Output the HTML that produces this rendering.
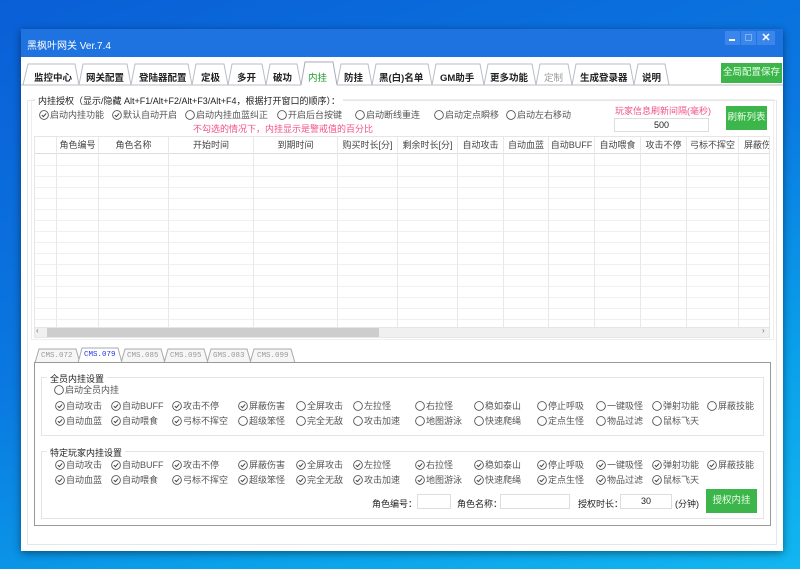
<!DOCTYPE html>
<html><head><meta charset="utf-8"><style>
*{margin:0;padding:0;box-sizing:border-box}
body{width:800px;height:569px;overflow:hidden;position:relative;font-family:"Liberation Sans","Noto Sans CJK SC",sans-serif;font-size:9px;color:#333;
background:linear-gradient(160deg,#0a5fd6 0%,#0a78e0 45%,#0aa0ea 75%,#12b6f0 100%)}
.a{position:absolute;white-space:nowrap}
#win{position:absolute;left:21px;top:29px;width:762px;height:522px;background:#fff;box-shadow:0 2px 8px rgba(0,0,0,.45)}
#tb{position:absolute;left:0;top:0;width:762px;height:28px;background:#1f73e0}
.it{position:absolute;white-space:nowrap;color:#555;font-size:9px;line-height:11px}
.it svg{vertical-align:-2px;margin-right:1px}
.tab{position:absolute;font-weight:bold;font-size:9.5px;color:#222}
.gl{position:absolute;border:1px solid #e4e4e4}
.gt{position:absolute;background:#fff;padding:0 3px;font-size:9px;color:#222}
.btn{position:absolute;background:#3cb64a;color:#eaffea;font-size:9.5px;text-align:center}
.inp{position:absolute;border:1px solid #ddd;background:#fff;text-align:center;font-size:9px;color:#222}
.hd{position:absolute;top:0;height:17px;line-height:17px;font-size:9px;color:#444;text-align:center}
.bt{position:absolute;font-family:'Liberation Mono',monospace;font-size:7.5px;color:#999;top:323px}
</style></head><body>
<div id="win">
<div id="tb"></div>
<div class="a" style="left:6px;top:8px;color:#fff;font-size:10px">黑枫叶网关 Ver.7.4</div>
<div class="a" style="left:704px;top:2px;width:15px;height:14px;background:#3a86ea"></div>
<div class="a" style="left:708px;top:10px;width:6px;height:1.5px;background:#fff"></div>
<div class="a" style="left:720px;top:2px;width:15px;height:14px;background:#3a86ea"></div>
<div class="a" style="left:724px;top:5px;width:7px;height:7px;border:1px solid #7fb0f0"></div>
<div class="a" style="left:736px;top:2px;width:18px;height:14px;background:#3a86ea;color:#fff;font-size:11px;font-weight:bold;text-align:center;line-height:14px">✕</div>

<svg class="a" style="left:0;top:28px" width="762" height="40">
<g fill="none" stroke="#b8bec6" stroke-width="1">
<path d="M2,28 L7,7 L54,7 L58,28 M58,28 L62,7 L106,7 L110,28 M110,28 L114,7 L167,7 L171,28 M171,28 L175,7 L203,7 L207,28 M207,28 L211,7 L241,7 L245,28 M245,28 L249,7 L276,7 L280,28 M316,28 L320,7 L347,7 L351,28 M351,28 L355,7 L407,7 L411,28 M411,28 L415,7 L459,7 L463,28 M463,28 L467,7 L511,7 L515,28 M515,28 L519,7 L547,7 L551,28 M551,28 L555,7 L609,7 L613,28 M613,28 L617,7 L644,7 L648,28"/>
<path d="M0,28 L280,28 M316,28 L762,28" />
<path d="M280,28 L284,5 L312,5 L316,28" stroke="#aab"/>
</g>
</svg>
<div class="tab" style="left:13px;top:41px">监控中心</div>
<div class="tab" style="left:65px;top:41px">网关配置</div>
<div class="tab" style="left:118px;top:41px">登陆器配置</div>
<div class="tab" style="left:180px;top:41px">定极</div>
<div class="tab" style="left:216px;top:41px">多开</div>
<div class="tab" style="left:252px;top:41px">破功</div>
<div class="tab" style="left:287px;top:41px;color:#1a9a2a;font-weight:normal">内挂</div>
<div class="tab" style="left:323px;top:41px">防挂</div>
<div class="tab" style="left:358px;top:41px">黑(白)名单</div>
<div class="tab" style="left:419px;top:41px">GM助手</div>
<div class="tab" style="left:469px;top:41px">更多功能</div>
<div class="tab" style="left:523px;top:41px;color:#999;font-weight:normal">定制</div>
<div class="tab" style="left:559px;top:41px">生成登录器</div>
<div class="tab" style="left:621px;top:41px">说明</div>
<div class="btn" style="left:700px;top:34px;width:61px;height:20px;line-height:20px">全局配置保存</div>

<div class="gl" style="left:6px;top:71px;width:750px;height:445px;border-color:#e6e6e6"></div>
<div class="gl" style="left:10px;top:70px;width:743px;height:241px;border-color:#eee"></div>
<div class="gt" style="left:14px;top:65px">内挂授权（显示/隐藏 Alt+F1/Alt+F2/Alt+F3/Alt+F4，根据打开窗口的顺序）：</div>
<div id="top"></div>
<div class="a" style="left:172px;top:93px;color:#f0508a;font-size:9px">不勾选的情况下，内挂显示是警戒值的百分比</div>
<div class="a" style="left:594px;top:75px;color:#f0508a;font-size:9px">玩家信息刷新间隔(毫秒)</div>
<div class="inp" style="left:593px;top:89px;width:95px;height:14px;line-height:12px">500</div>
<div class="btn" style="left:705px;top:77px;width:41px;height:24px;line-height:24px">刷新列表</div>

<div class="a" style="left:13px;top:107px;width:736px;height:202px;border:1px solid #e6e6e6;background:#fff;overflow:hidden">
<div class="a" style="left:0;top:0;width:736px;height:17px;border-bottom:1px solid #ddd"></div>
<div class="a" style="left:0;top:18px;width:736px;height:190px;background:repeating-linear-gradient(to bottom,#fff 0,#fff 10px,#f0f0f0 10px,#f0f0f0 11px)"></div>
<div class="a" style="left:0;top:0;width:736px;height:200px;background:linear-gradient(to right,transparent 21px,#e8e8e8 21px,#e8e8e8 22px,transparent 22px,transparent 63px,#e8e8e8 63px,#e8e8e8 64px,transparent 64px,transparent 133px,#e8e8e8 133px,#e8e8e8 134px,transparent 134px,transparent 218px,#e8e8e8 218px,#e8e8e8 219px,transparent 219px,transparent 302px,#e8e8e8 302px,#e8e8e8 303px,transparent 303px,transparent 362px,#e8e8e8 362px,#e8e8e8 363px,transparent 363px,transparent 422px,#e8e8e8 422px,#e8e8e8 423px,transparent 423px,transparent 468px,#e8e8e8 468px,#e8e8e8 469px,transparent 469px,transparent 513px,#e8e8e8 513px,#e8e8e8 514px,transparent 514px,transparent 559px,#e8e8e8 559px,#e8e8e8 560px,transparent 560px,transparent 605px,#e8e8e8 605px,#e8e8e8 606px,transparent 606px,transparent 651px,#e8e8e8 651px,#e8e8e8 652px,transparent 652px,transparent 703px,#e8e8e8 703px,#e8e8e8 704px,transparent 704px)"></div>
<div class="hd" style="left:22px;width:41px">角色编号</div>
<div class="hd" style="left:64px;width:69px">角色名称</div>
<div class="hd" style="left:134px;width:84px">开始时间</div>
<div class="hd" style="left:219px;width:83px">到期时间</div>
<div class="hd" style="left:303px;width:59px">购买时长[分]</div>
<div class="hd" style="left:363px;width:59px">剩余时长[分]</div>
<div class="hd" style="left:423px;width:45px">自动攻击</div>
<div class="hd" style="left:469px;width:44px">自动血蓝</div>
<div class="hd" style="left:514px;width:45px">自动BUFF</div>
<div class="hd" style="left:560px;width:45px">自动喂食</div>
<div class="hd" style="left:606px;width:45px">攻击不停</div>
<div class="hd" style="left:652px;width:51px">弓标不挥空</div>
<div class="hd" style="left:704px;width:40px;text-align:left;padding-left:5px">屏蔽伤</div>
</div>
<div class="a" style="left:13px;top:298px;width:736px;height:11px;background:#f0f0f0;border:1px solid #e6e6e6"></div>
<div class="a" style="left:26px;top:299px;width:332px;height:9px;background:#cdcdcd"></div>
<div class="a" style="left:15px;top:297px;color:#777;font-size:8px">‹</div>
<div class="a" style="left:741px;top:297px;color:#777;font-size:8px">›</div>

<svg class="a" style="left:0;top:316px" width="762" height="20">
<g fill="#f6f6f6" stroke="#aaa" stroke-width="1">
<path d="M14,18 L18,4 L55,4 L59,18"/>
<path d="M100,18 L104,4 L140,4 L144,18"/>
<path d="M143,18 L147,4 L183,4 L187,18"/>
<path d="M186,18 L190,4 L226,4 L230,18"/>
<path d="M229,18 L233,4 L270,4 L274,18"/>
<path d="M57,18 L61,3 L97,3 L101,18" fill="#fff"/>
</g>
</svg>
<div class="bt" style="left:20px">CMS.072</div>
<div class="bt" style="left:63px;top:322px;color:#2233ee">CMS.079</div>
<div class="bt" style="left:106px">CMS.085</div>
<div class="bt" style="left:149px">CMS.095</div>
<div class="bt" style="left:192px">GMS.083</div>
<div class="bt" style="left:236px">CMS.099</div>
<div class="a" style="left:13px;top:333px;width:737px;height:164px;border:1px solid #999"></div>

<div class="gl" style="left:20px;top:348px;width:723px;height:59px"></div>
<div class="gt" style="left:26px;top:343px">全员内挂设置</div>
<div class="gl" style="left:20px;top:422px;width:723px;height:68px"></div>
<div class="gt" style="left:26px;top:417px">特定玩家内挂设置</div>

<div id="cks"></div>
<div class="a" style="left:351px;top:468px;font-size:9px;color:#222">角色编号：</div>
<div class="inp" style="left:396px;top:465px;width:34px;height:15px"></div>
<div class="a" style="left:436px;top:468px;font-size:9px;color:#222">角色名称：</div>
<div class="inp" style="left:479px;top:465px;width:70px;height:15px"></div>
<div class="a" style="left:557px;top:468px;font-size:9px;color:#222">授权时长：</div>
<div class="inp" style="left:599px;top:465px;width:52px;height:15px;line-height:13px">30</div>
<div class="a" style="left:654px;top:468px;font-size:9px;color:#222">(分钟)</div>
<div class="btn" style="left:685px;top:460px;width:51px;height:24px;line-height:24px">授权内挂</div>
</div>
<script>
function ic(c){return '<svg width="10" height="10" viewBox="0 0 10 10"><circle cx="5" cy="5" r="4.4" fill="#fff" stroke="#555" stroke-width="0.9"/>'+(c?'<path d="M2.8,5.1 L4.4,6.6 L7.2,3.4" fill="none" stroke="#444" stroke-width="1"/>':'')+'</svg>';}
function item(x,y,t,c){return '<div class="it" style="left:'+x+'px;top:'+y+'px">'+ic(c)+t+'</div>';}
var xs=[55,111,172,238,296,353,415,474,537,596,652,707];
var r1=["自动攻击","自动BUFF","攻击不停","屏蔽伤害","全屏攻击","左拉怪","右拉怪","稳如泰山","停止呼吸","一键吸怪","弹射功能","屏蔽技能"];
var r2=["自动血蓝","自动喂食","弓标不挥空","超级笨怪","完全无敌","攻击加速","地图游泳","快速爬绳","定点生怪","物品过滤","鼠标飞天"];
var c1=[1,1,1,1,0,0,0,0,0,0,0,0],c2=[1,1,1,0,0,0,0,0,0,0,0];
var h="";
function add(y,arr,ch){arr.forEach(function(t,i){h+=item(xs[i]-21,y-29-6,t,ch?ch[i]:1);});}
h+=item(33,356,"启动全员内挂",0);
add(407,r1,c1);add(422,r2,c2);add(466,r1,null);add(481,r2,null);
document.getElementById('cks').innerHTML=h;
var tp=[[18,"启动内挂功能",1],[91,"默认自动开启",1],[164,"启动内挂血蓝纠正",0],[256,"开启后台按键",0],[334,"启动断线重连",0],[413,"启动定点瞬移",0],[485,"启动左右移动",0]];
document.getElementById('top').innerHTML=tp.map(function(a){return item(a[0],81,a[1],a[2]);}).join('');
</script>
</body></html>
